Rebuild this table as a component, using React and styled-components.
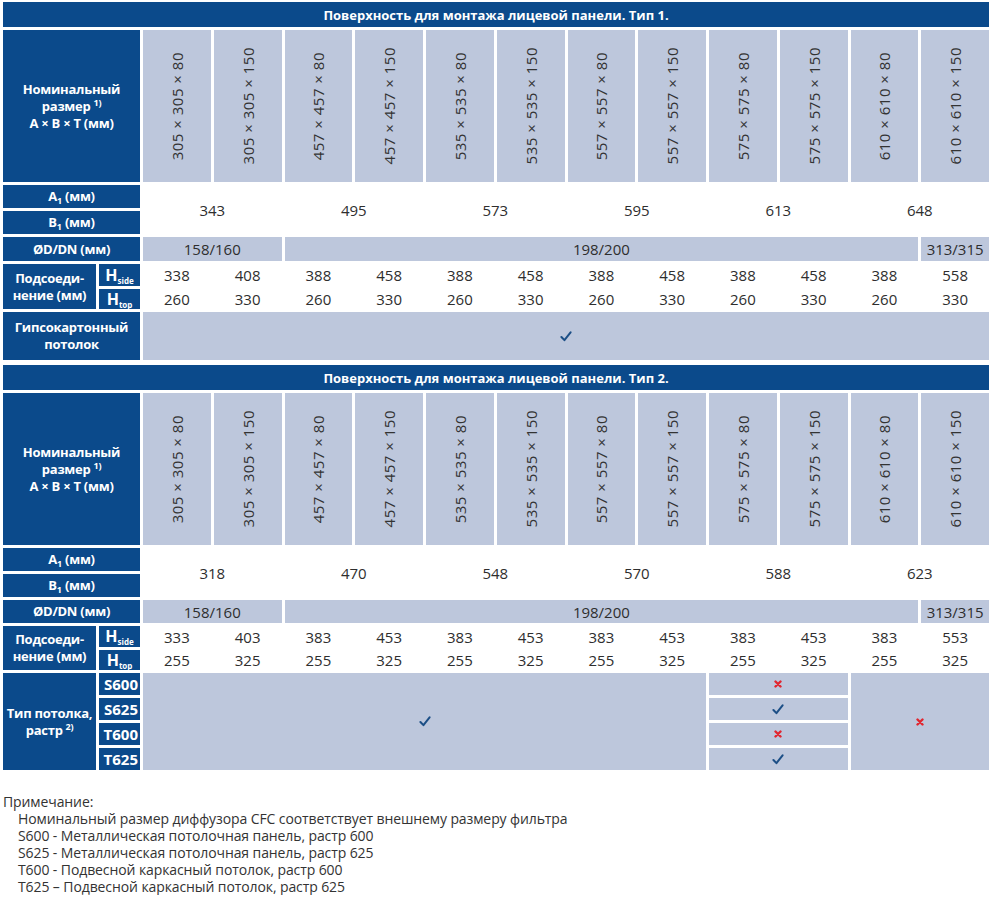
import React from 'react';
import styled, { createGlobalStyle } from 'styled-components';

const GlobalStyle = createGlobalStyle`
  body {
    margin: 0;
    background: #fff;
    font-family: "Open Sans", "Noto Sans", sans-serif;
    color: #2e2e2e;
  }
`;

const NAVY = '#0b4a8b';
const PALE = '#bdc7dc';

const Page = styled.div`
  width: 986px;
  padding: 2px 0 0 3px;
`;

const Table = styled.div`
  display: flex;
  flex-direction: column;
  gap: 3px;
  margin-bottom: 5px;
`;

const TitleBar = styled.div`
  height: 25px;
  background: ${NAVY};
  color: #fff;
  font-weight: 700;
  font-size: 13px;
  display: flex;
  align-items: center;
  justify-content: center;
`;

const Grid = styled.div`
  display: grid;
  grid-template-columns: 93px 41px repeat(12, 1fr);
  grid-template-rows: ${(p) => p.$rows};
  gap: 3px;
`;

const Label = styled.div`
  grid-column: ${(p) => p.$col};
  grid-row: ${(p) => p.$row};
  background: ${NAVY};
  color: #fff;
  font-weight: 700;
  font-size: ${(p) => p.$size || 13}px;
  letter-spacing: ${(p) => (p.$size ? 0 : -0.25)}px;
  line-height: 17px;
  text-align: center;
  white-space: nowrap;
  display: flex;
  flex-direction: column;
  align-items: center;
  justify-content: center;
`;

const SubLabel = styled(Label)`
  align-items: flex-end;
  padding-right: 2px;
`;

const SizeCell = styled.div`
  grid-row: 1;
  background: ${PALE};
  display: flex;
  align-items: center;
  justify-content: center;
  span {
    writing-mode: vertical-rl;
    text-orientation: sideways;
    transform: rotate(180deg);
    font-size: 15px;
    letter-spacing: 0.5px;
    color: #333;
    white-space: nowrap;
  }
`;

const Value = styled.div`
  grid-column: ${(p) => p.$col};
  grid-row: ${(p) => p.$row};
  background: ${(p) => (p.$fill ? PALE : 'transparent')};
  display: flex;
  align-items: center;
  justify-content: center;
  font-size: 15px;
  color: #2e2e2e;
`;

const Sup = styled.sup`
  font-size: 9px;
  vertical-align: 5px;
  line-height: 0;
  margin-left: 3px;
`;

const Sub = styled.sub`
  font-size: ${(p) => p.$size || 9}px;
  vertical-align: -3px;
  line-height: 0;
`;

const Notes = styled.div`
  margin-top: 23px;
  font-size: 14px;
  letter-spacing: -0.1px;
  line-height: 17px;
  color: #333;
`;

const NoteLine = styled.div`
  padding-left: ${(p) => (p.$indent ? 15 : 0)}px;
`;

const Check = () => (
  <svg width="12" height="11" viewBox="0 0 13 12">
    <path d="M1.5 6.5 L4.8 10 L11.5 1.5" fill="none" stroke="#1c4f86" strokeWidth="2.2" strokeLinecap="round" strokeLinejoin="round" />
  </svg>
);

const Cross = () => (
  <svg width="8" height="8" viewBox="0 0 8 8">
    <path d="M1.5 1.5 L6.5 6.5 M6.5 1.5 L1.5 6.5" stroke="#e1262f" strokeWidth="2.4" strokeLinecap="round" />
  </svg>
);

const sizes = [
  '305 × 305 × 80', '305 × 305 × 150', '457 × 457 × 80', '457 × 457 × 150',
  '535 × 535 × 80', '535 × 535 × 150', '557 × 557 × 80', '557 × 557 × 150',
  '575 × 575 × 80', '575 × 575 × 150', '610 × 610 × 80', '610 × 610 × 150',
];

const tables = [
  {
    title: 'Поверхность для монтажа лицевой панели. Тип 1.',
    rows: '152px 23px 23px 24px 22px 20px 48px',
    ab: ['343', '495', '573', '595', '613', '648'],
    side: ['338', '408', '388', '458', '388', '458', '388', '458', '388', '458', '388', '558'],
    top: ['260', '330', '260', '330', '260', '330', '260', '330', '260', '330', '260', '330'],
  },
  {
    title: 'Поверхность для монтажа лицевой панели. Тип 2.',
    rows: '152px 23px 23px 23px 21px 20px 22px 22px 22px 22px',
    ab: ['318', '470', '548', '570', '588', '623'],
    side: ['333', '403', '383', '453', '383', '453', '383', '453', '383', '453', '383', '553'],
    top: ['255', '325', '255', '325', '255', '325', '255', '325', '255', '325', '255', '325'],
    ceiling: true,
  },
];

const ceilingRows = [
  { code: 'S600', ok: false },
  { code: 'S625', ok: true },
  { code: 'T600', ok: false },
  { code: 'T625', ok: true },
];

const SpecTable = ({ t }) => (
  <Table>
    <TitleBar>{t.title}</TitleBar>
    <Grid $rows={t.rows}>
      <Label $col="1 / 3" $row="1">
        <div>Номинальный</div>
        <div>размер<Sup>1)</Sup></div>
        <div>A × B × T (мм)</div>
      </Label>
      {sizes.map((s, i) => (
        <SizeCell key={s} style={{ gridColumn: i + 3 }}><span>{s}</span></SizeCell>
      ))}

      <Label $col="1 / 3" $row="2">
        <div>A<Sub>1</Sub> (мм)</div>
      </Label>
      <Label $col="1 / 3" $row="3">
        <div>B<Sub>1</Sub> (мм)</div>
      </Label>
      {t.ab.map((v, i) => (
        <Value key={i} $col={`${3 + i * 2} / span 2`} $row="2 / 4">{v}</Value>
      ))}

      <Label $col="1 / 3" $row="4">ØD/DN (мм)</Label>
      <Value $fill $col="3 / 5" $row="4">158/160</Value>
      <Value $fill $col="5 / 14" $row="4">198/200</Value>
      <Value $fill $col="14 / 15" $row="4">313/315</Value>

      <Label $col="1" $row="5 / 7">
        <div>Подсоеди-</div>
        <div>нение (мм)</div>
      </Label>
      <Label $col="2" $row="5" $size={16}>
        <div>H<Sub $size={8}>side</Sub></div>
      </Label>
      <Label $col="2" $row="6" $size={16}>
        <div>H<Sub $size={8}>top</Sub></div>
      </Label>
      {t.side.map((v, i) => (
        <Value key={`s${i}`} $col={`${3 + i}`} $row="5">{v}</Value>
      ))}
      {t.top.map((v, i) => (
        <Value key={`t${i}`} $col={`${3 + i}`} $row="6">{v}</Value>
      ))}

      {!t.ceiling && (
        <>
          <Label $col="1 / 3" $row="7">
            <div>Гипсокартонный</div>
            <div>потолок</div>
          </Label>
          <Value $fill $col="3 / 15" $row="7"><Check /></Value>
        </>
      )}

      {t.ceiling && (
        <>
          <Label $col="1" $row="7 / 11">
            <div>Тип потолка,</div>
            <div>растр<Sup>2)</Sup></div>
          </Label>
          {ceilingRows.map((c, i) => (
            <SubLabel key={c.code} $col="2" $row={`${7 + i}`} $size={15}>{c.code}</SubLabel>
          ))}
          <Value $fill $col="3 / 11" $row="7 / 11"><Check /></Value>
          {ceilingRows.map((c, i) => (
            <Value key={`c${c.code}`} $fill $col="11 / 13" $row={`${7 + i}`}>
              {c.ok ? <Check /> : <Cross />}
            </Value>
          ))}
          <Value $fill $col="13 / 15" $row="7 / 11"><Cross /></Value>
        </>
      )}
    </Grid>
  </Table>
);

const App = () => (
  <>
    <GlobalStyle />
    <Page>
      {tables.map((t) => (
        <SpecTable key={t.title} t={t} />
      ))}
      <Notes>
        <NoteLine>Примечание:</NoteLine>
        <NoteLine $indent>Номинальный размер диффузора CFC соответствует внешнему размеру фильтра</NoteLine>
        <NoteLine $indent>S600 - Металлическая потолочная панель, растр 600</NoteLine>
        <NoteLine $indent>S625 - Металлическая потолочная панель, растр 625</NoteLine>
        <NoteLine $indent>T600 - Подвесной каркасный потолок, растр 600</NoteLine>
        <NoteLine $indent>T625 – Подвесной каркасный потолок, растр 625</NoteLine>
      </Notes>
    </Page>
  </>
);

export default App;
